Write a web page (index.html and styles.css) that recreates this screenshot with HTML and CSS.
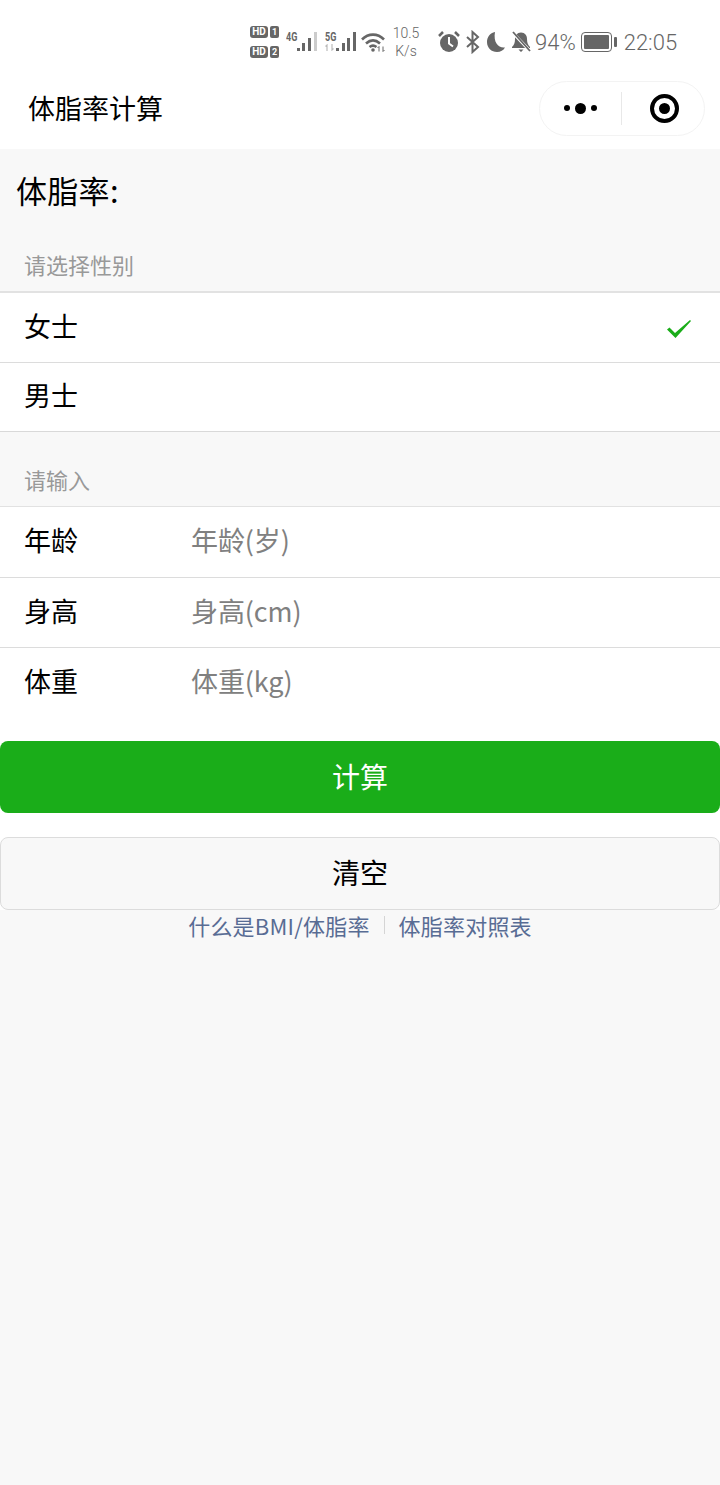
FILE: index.html
```html
<!DOCTYPE html>
<html lang="zh-CN">
<head>
    <meta charset="UTF-8">
    <meta name="viewport" content="width=device-width, initial-scale=1">
    <title>体脂率计算</title>
    <link rel="stylesheet" href="styles.css">
</head>
<body>

<div class="header">
    <div class="statusbar">
        <div class="hd">
            <div class="hd-line"><span class="hd-tag">HD</span><span class="hd-num">1</span></div>
            <div class="hd-line"><span class="hd-tag">HD</span><span class="hd-num">2</span></div>
        </div>
        <div class="signal signal-4g">
            <span class="net">4G</span>
            <svg width="21" height="21" viewBox="0 0 21 21"><path fill="#666" d="M1 18h3v3H1zM6 13h3v8H6zM12 8h3v13h-3z"/><path fill="#ccc" d="M18 2h3v19h-3z"/></svg>
        </div>
        <div class="signal signal-5g">
            <span class="net">5G</span>
            <svg class="net-arrows" width="9" height="7" viewBox="0 0 9 7"><path fill="none" stroke="#bbb" stroke-width="1.200" d="M2 7V1L.500 2.500M7 0v6l1.500-1.500"/></svg>
            <svg width="21" height="21" viewBox="0 0 21 21"><path fill="#666" d="M1 18h3v3H1zM7 13h3v8H7zM12 8h3v13h-3zM18 2h3v19h-3z"/></svg>
        </div>
        <svg class="wifi" width="24" height="20" viewBox="0 0 24 20"><path fill="none" stroke="#666" stroke-width="2.600" d="M1 7.500c6.500-6.500 15.500-6.500 22 0M5 11.500c4.500-4 9.500-4 14 0M8.500 15c2-1.500 5-1.500 7 0"/><circle cx="12" cy="18" r="1.800" fill="#666"/><path fill="none" stroke="#666" stroke-width="1" d="M18 19.500v-5l-1.500 1.500M22 14.500v5l1.500-1.500"/></svg>
        <div class="speed"><span>10.5</span><span>K/s</span></div>
        <svg class="st-icon alarm" width="24" height="24" viewBox="0 0 24 24"><circle cx="12" cy="13" r="9" fill="#666"/><path d="M12 7v6.500l4 3" fill="none" stroke="#fff" stroke-width="2"/><path d="M2 6l4-4M22 6l-4-4" stroke="#666" stroke-width="2.500"/></svg>
        <svg class="st-icon bt" width="16" height="24" viewBox="0 0 16 24"><path d="M2 7l11 10-5.500 5V2L13 7 2 17" fill="none" stroke="#666" stroke-width="2"/></svg>
        <svg class="st-icon moon" width="20" height="22" viewBox="0 0 20 22"><path fill="#666" d="M9 1C4 2 1 6 1 11c0 6 4.500 10 10 10 3.500 0 6.500-1.700 8-4.500C13 17.500 7 12 9 1z"/></svg>
        <svg class="st-icon bell" width="20" height="22" viewBox="0 0 20 22"><path fill="#666" d="M10 1.500c-4 0-6 3-6 6.500 0 4-1 6-3 8v1h18v-1c-2-2-3-4-3-8 0-3.500-2-6.500-6-6.500zM7.500 18.500h5L10 21z"/><path stroke="#fff" stroke-width="3" d="M2 2l17 18"/><path stroke="#666" stroke-width="1.800" d="M2 1l17 19"/></svg>
        <span class="pct">94%</span>
        <div class="battery"><div class="battery-body"><div class="battery-fill"></div></div><div class="battery-cap"></div></div>
        <span class="time">22:05</span>
    </div>
    <div class="navbar">
        <div class="nav-title">体脂率计算</div>
        <div class="capsule">
            <div class="capsule-dots"><i></i><i class="big"></i><i></i></div>
            <div class="capsule-line"></div>
            <div class="capsule-close"><span></span></div>
        </div>
    </div>
</div>

<div class="result">体脂率:</div>

<div class="group-title first">请选择性别</div>
<div class="cells gender">
    <div class="cell">
        <span>女士</span>
        <svg class="check" width="26" height="20" viewBox="0 0 26 20"><path fill="#1aad19" d="M1 10.500l2.500-2 5.500 5.500L24 1l1 1L9.500 19z"/></svg>
    </div>
    <div class="cell"><span>男士</span></div>
</div>

<div class="group-title second">请输入</div>
<div class="form">
    <div class="cells">
        <div class="cell"><span class="label">年龄</span><span class="placeholder">年龄(岁)</span></div>
        <div class="cell"><span class="label">身高</span><span class="placeholder">身高(cm)</span></div>
        <div class="cell"><span class="label">体重</span><span class="placeholder">体重(kg)</span></div>
    </div>
    <button class="button button-primary">计算</button>
    <button class="button button-default">清空</button>
</div>

<div class="links">
    <a>什么是BMI/体脂率</a>
    <span class="links-sep"></span>
    <a>体脂率对照表</a>
</div>

</body>
</html>
```

FILE: styles.css
```css
body {
    margin: 0;
    height: 1485px;
    overflow: hidden;
    background-color: #f8f8f8;
    color: #000;
    font-family: "Noto Sans CJK SC", "Noto Sans", sans-serif;
}
.header {
    height: 149px;
    background-color: #fff;
}
.statusbar {
    height: 73px;
    display: flex;
    align-items: center;
    padding-left: 250px;
    padding-top: 11px;
    box-sizing: border-box;
    color: #666;
    font-family: Roboto, sans-serif;
}
.hd {
    display: flex;
    flex-direction: column;
    gap: 8px;
}
.hd-line {
    display: flex;
    align-items: center;
    height: 12px;
}
.hd-tag {
    width: 18px;
    height: 12px;
    line-height: 12px;
    border-radius: 3px;
    background-color: #666;
    color: #fff;
    font-size: 10px;
    font-weight: 700;
    text-align: center;
}
.hd-num {
    width: 9px;
    height: 12px;
    line-height: 12px;
    margin-left: 2px;
    border-radius: 2px;
    background-color: #666;
    color: #fff;
    font-size: 9px;
    font-weight: 700;
    text-align: center;
}
.signal {
    position: relative;
    width: 32px;
    height: 24px;
    margin-left: 6px;
    display: flex;
    justify-content: flex-end;
    align-items: flex-start;
}
.signal-5g {
    margin-left: 7px;
}
.net {
    position: absolute;
    left: 1px;
    top: 1px;
    font-size: 12px;
    font-weight: 700;
    line-height: 13px;
    transform: scaleX(0.75);
    transform-origin: left center;
}
.net-arrows {
    position: absolute;
    left: 1px;
    top: 14px;
}
.wifi {
    margin-left: 5px;
}
.speed {
    display: flex;
    flex-direction: column;
    align-items: center;
    width: 32px;
    margin-left: 5px;
    font-size: 14px;
    font-weight: 300;
    line-height: 18px;
    color: #666;
}
.alarm {
    margin-left: 15px;
}
.bt {
    margin-left: 4px;
}
.moon {
    margin-left: 5px;
}
.bell {
    margin-left: 5px;
}
.pct {
    margin-left: 4px;
    font-size: 22px;
    font-weight: 300;
}
.battery {
    display: flex;
    align-items: center;
    margin-left: 5px;
}
.battery-body {
    width: 25px;
    height: 14px;
    padding: 2px;
    border: 1.500px solid #666;
    border-radius: 4px;
}
.battery-fill {
    height: 100%;
    border-radius: 1px;
    background-color: #666;
}
.battery-cap {
    width: 3px;
    height: 10px;
    margin-left: 2px;
    border-radius: 1px;
    background-color: #666;
}
.time {
    margin-left: 7px;
    font-size: 22px;
    font-weight: 300;
}
.navbar {
    height: 70px;
    display: flex;
    align-items: center;
    justify-content: space-between;
    padding: 0 15px 0 28px;
}
.nav-title {
    font-size: 27px;
    line-height: 38px;
}
.capsule {
    width: 166px;
    height: 55px;
    display: flex;
    align-items: center;
    box-sizing: border-box;
    border: 1px solid #f3f3f3;
    border-radius: 28px;
}
.capsule-dots {
    width: 80px;
    display: flex;
    justify-content: center;
    align-items: center;
    gap: 5px;
}
.capsule-dots i {
    width: 6px;
    height: 6px;
    border-radius: 50%;
    background-color: #000;
}
.capsule-dots i.big {
    width: 11px;
    height: 11px;
}
.capsule-line {
    width: 1px;
    height: 33px;
    margin-left: 1px;
    background-color: #e8e8e8;
}
.capsule-close {
    flex: 1;
    display: flex;
    justify-content: center;
    padding-left: 2px;
}
.capsule-close span {
    width: 11px;
    height: 11px;
    border: 5px solid #fff;
    outline: 4px solid #000;
    border-radius: 50%;
    background-color: #000;
}
.result {
    height: 81px;
    padding-left: 16px;
    font-size: 31px;
    line-height: 81px;
    letter-spacing: 0.3px;
}
.group-title {
    padding-left: 24px;
    color: #999;
    font-size: 22px;
    line-height: 32px;
}
.first {
    margin-top: 18px;
    padding-bottom: 11px;
}
.second {
    margin-top: 31px;
    padding-bottom: 11px;
}
.cells {
    background-color: #fff;
    border-top: 2px solid #e2e2e2;
    border-bottom: 1px solid #d9d9d9;
}
.form .cells {
    border-bottom: 0;
    border-top-width: 1px;
}
.cell {
    height: 64px;
    display: flex;
    align-items: center;
    justify-content: space-between;
    padding: 0 28px 5px 24px;
    font-size: 27px;
}
.cell + .cell {
    border-top: 1px solid #dcdcdc;
}
.gender .cell + .cell {
    height: 63px;
}
.form .cell {
    justify-content: flex-start;
}
.form .cell:first-child {
    height: 65px;
}
.check {
    margin-top: 7px;
}
.label {
    width: 167px;
}
.placeholder {
    color: #808080;
    letter-spacing: -0.1px;
}
.form {
    background-color: #fff;
    height: 404px;
}
.button {
    display: block;
    width: 100%;
    padding: 0 0 3px;
    font-family: inherit;
    font-size: 28px;
    border-radius: 8px;
}
.button-primary {
    height: 72px;
    margin-top: 24px;
    border: none;
    background-color: #1aad19;
    color: #fff;
}
.button-default {
    height: 73px;
    margin-top: 24px;
    border: 1px solid #dcdcdc;
    background-color: #f8f8f8;
    color: #000;
}
.links {
    display: flex;
    justify-content: center;
    align-items: center;
    height: 30px;
    color: #586c94;
    font-size: 22px;
    letter-spacing: 0.2px;
}
.links-sep {
    width: 1px;
    height: 18px;
    margin: 0 14px;
    background-color: #d5d5d5;
}
```
